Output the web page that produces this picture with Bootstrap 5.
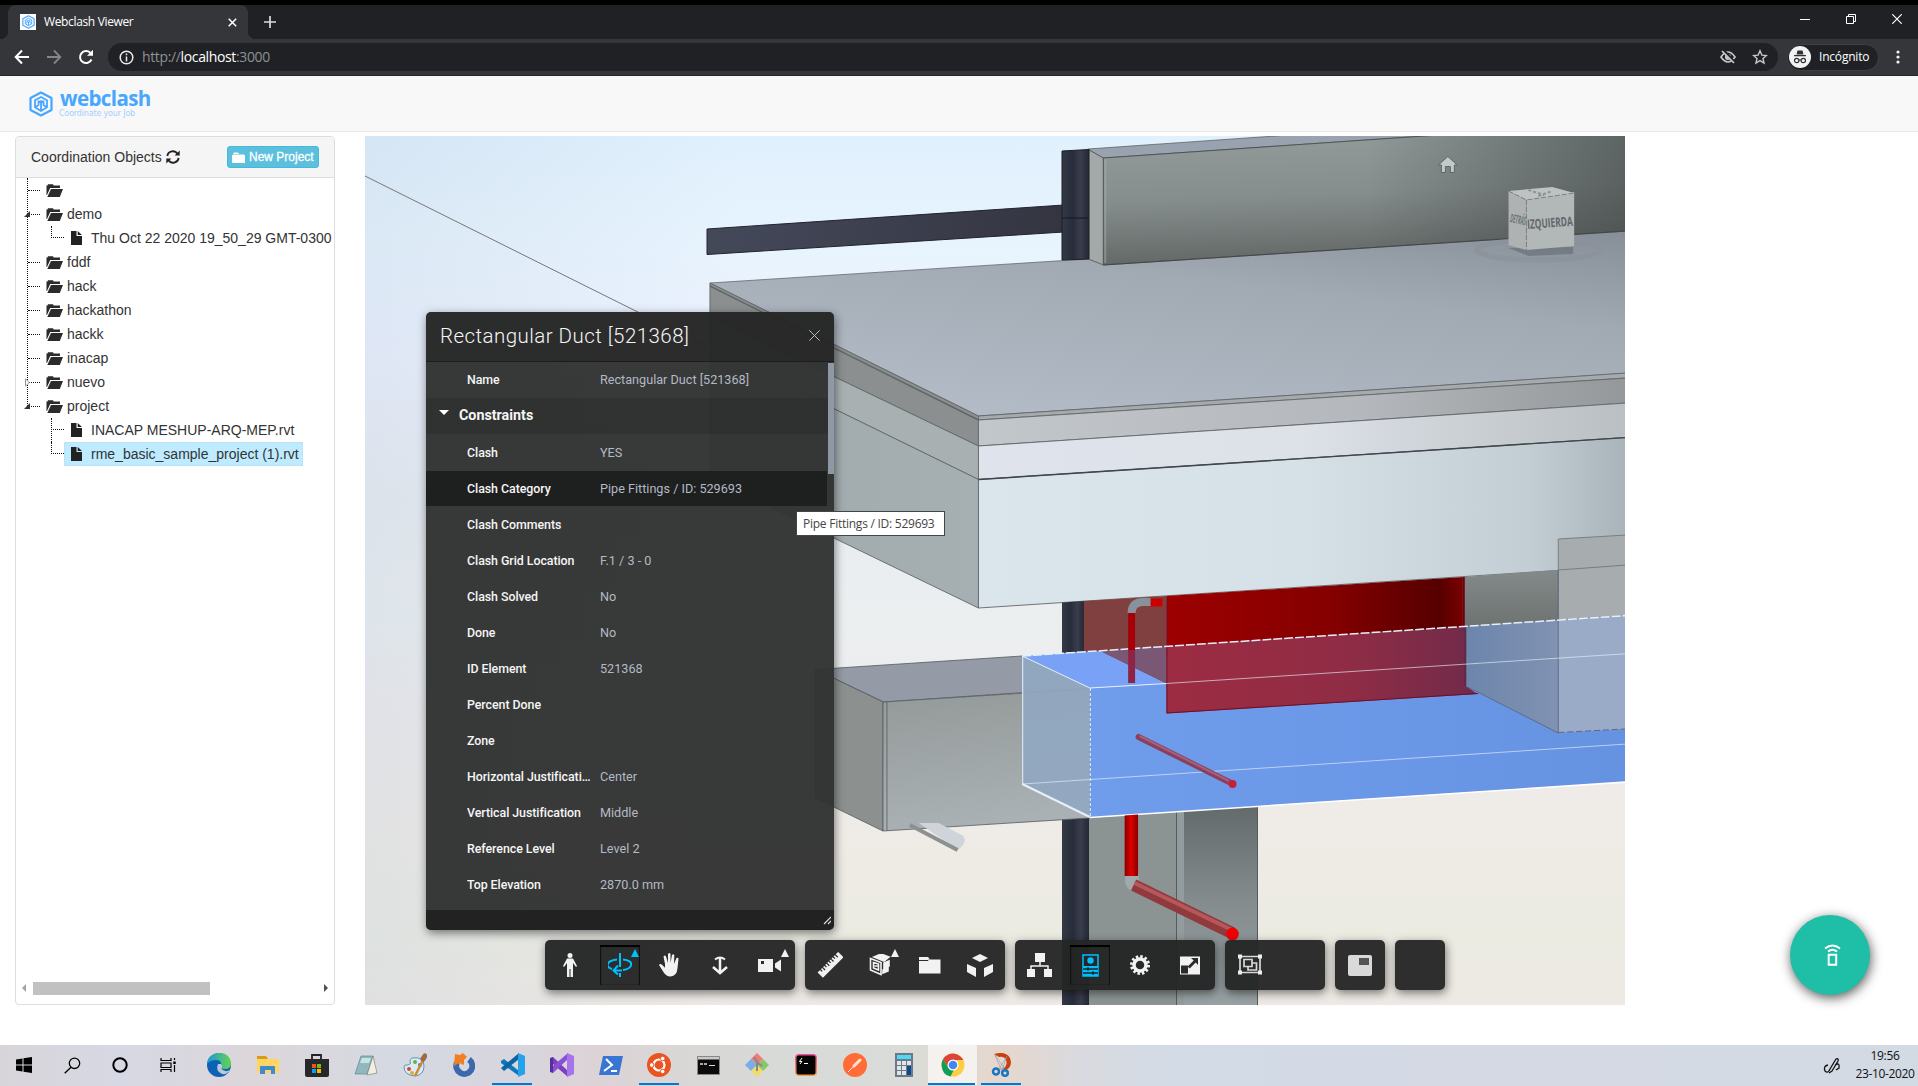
<!DOCTYPE html>
<html lang="es">
<head>
<meta charset="utf-8">
<title>Webclash Viewer</title>
<link href="https://cdn.jsdelivr.net/npm/bootstrap@5.3.0/dist/css/bootstrap.min.css" rel="stylesheet">
<style>
:root{--seg:"Open Sans","Noto Sans",sans-serif;--art:Roboto,"Noto Sans",sans-serif}
body{width:1918px;height:1086px;overflow:hidden;font-family:"Liberation Sans",Arial,sans-serif;font-size:14px;line-height:20px;color:#333;background:#fff}
svg{display:block;flex:none}
.tabstrip{height:39px;background:#202124;border-top:5px solid #000;padding-left:8px}
.wtab{width:240px;height:34px;background:#35363a;border-radius:8px 8px 0 0;padding:0 11px 0 12px;color:#fff;font:12px/34px var(--seg);letter-spacing:-.35px;position:relative}
.wtab::before,.wtab::after{content:"";position:absolute;bottom:0;width:8px;height:8px;background:radial-gradient(circle at 0 0,transparent 8px,#35363a 8.5px)}
.wtab::before{left:-8px}
.wtab::after{right:-8px;transform:scaleX(-1)}
.fav{width:16px;height:16px;background:#fff;margin-right:8px}
.wbtns{gap:36px;padding-right:16px;height:28px}
.omnirow{height:37px;background:#35363a;border-bottom:1px solid #29242a;padding:0 14px 0 14px}
.omnirow>svg+svg{margin-left:16px}
.omni{width:1670px;height:28px;border-radius:14px;background:#202124;margin-left:14px;padding:0 10px 0 11px;font:14px/28px var(--seg);color:#8d9196;letter-spacing:-.36px}
.omni b{font-weight:400;color:#fff}
.incog{width:92px;height:27px;border-radius:14px;background:#202124;border:1px solid #3f4044;margin-left:9px;padding-left:1px;color:#fff;font:12px/24px var(--seg);letter-spacing:-.2px}
.apphead{height:56px;background:#f8f8f8;border-bottom:1px solid #e7e7e7;padding:15px 0 0 29px}
.brandtext{margin-left:7px}
.brandname{font:700 20.5px/19px "Open Sans",sans-serif;color:#47a6ff;letter-spacing:-.6px;margin-top:-2px}
.brandsub{font:8px/10px "DejaVu Sans",sans-serif;color:#a2d0fc;letter-spacing:-.17px;margin:1px 0 0 -1px}
.workarea{height:913px;padding:4px 0 0 15px}
.objects{width:320px;height:869px;border:1px solid #ddd;border-radius:4px;background:#fff}
.objhead{height:41px;background:#f5f5f5;border-bottom:1px solid #ddd;padding:0 15px;border-radius:3px 3px 0 0}
.btn-new{background:#5bc0de;border:1px solid #46b8da;color:#fff;font-size:12px;line-height:18px;width:92px;height:22px;padding:0 4px;border-radius:3px;-webkit-text-stroke:.3px #fff}
.tree{position:relative;height:801px;overflow:hidden;margin:0;padding:0;list-style:none}
.tree::before{content:"";position:absolute;left:11px;top:0;height:228px;border-left:1px dotted #111}
.tree li{height:24px;display:flex;align-items:center;white-space:nowrap}
.tree li>*{flex:none}
.tw{width:12px;height:24px;display:flex;align-items:center;justify-content:flex-end;z-index:1}
.tw svg{margin-right:-2px}
.dots{width:12px;border-top:1px dotted #111;margin-right:6px}
.tree .kid{padding-left:35px}
.kid .elbow{width:13px;height:24px;position:relative;border:0}
.elbow::before{content:"";position:absolute;inset:0 0 12px 0;border-left:1px dotted #111;border-bottom:1px dotted #111}
.elbow.thru::after{content:"";position:absolute;left:0;top:0;bottom:0;border-left:1px dotted #111}
.leaf{height:24px;display:flex;align-items:center;padding:0 4px 0 7px;gap:9px;border-radius:2px;line-height:22px}
.leaf.on{background:#beebff;box-shadow:inset 0 0 1px #999}
.hbar{height:18px;padding:0 4px}
.hthumb{width:177px;height:13px;background:#c1c1c1;margin-left:5px}
.viewer{width:1260px;height:869px;margin-left:30px;position:relative;overflow:hidden}
.props{position:absolute;left:61px;top:176px;width:408px;height:618px;border-radius:5px;background:rgba(38,39,38,.93);box-shadow:1px 3px 10px rgba(0,0,0,.5);color:#f5f5f5;font:13px/36px var(--art)}
.ptitle{height:50px;border-bottom:1px solid #1b1c1c;padding:0 14px 2px;font-size:20.5px;background:rgba(35,36,36,.5);border-radius:5px 5px 0 0;font-weight:300;letter-spacing:.45px}
.prow{height:36px;padding-left:41px;width:401px}
.prow dt{width:133px;font-weight:500;font-size:12.4px;letter-spacing:-.05px;padding-right:8px;overflow:hidden;text-overflow:ellipsis;white-space:nowrap;margin:0}
.prow dd{margin:0;color:#b3bac6;font-size:12.65px}
.plist{height:548px;background:rgba(60,61,61,.5);margin:0;position:relative;overflow:hidden}
.plist::after{content:"";position:absolute;right:0;top:1px;width:6px;height:111px;background:#8f98a5}
.phead{height:36px;padding:0 0 3px 13px;font-weight:700;font-size:14.3px;gap:10px;background:rgba(38,38,38,.35)}
.phead svg{margin-top:-5px}
.prow.first{height:37px;padding-top:1px}
.prow.hov{background:#1e1f1f;height:35px;margin-bottom:1px;line-height:35px}
.pfoot{height:20px;background:#222;border-radius:0 0 5px 5px;padding:6px 3px 0}
.tipbox{position:absolute;left:431px;top:375px;width:149px;height:25px;background:#fff;border:1px solid #444;color:#444;font:12px/23px var(--seg);letter-spacing:-.25px;padding-left:6px;white-space:nowrap}
.tools{position:absolute;left:180px;top:804px;gap:10px}
.tgroup{background:rgba(36,37,37,.96);border-radius:5px;height:50px;box-shadow:1px 3px 10px rgba(0,0,0,.5)}
.tgroup.wide{width:100px}
.tbtn{width:50px;height:50px;display:flex;align-items:center;justify-content:center;position:relative;color:#f2f2f2}
.tbtn.act{color:#00bfff}
.tbtn.act::before{content:"";position:absolute;left:5px;top:5px;width:40px;height:40px;box-shadow:inset 0 2px 1px #000,inset 1px 0 1px #111,inset -1px 0 1px #111}
.tbtn.more::after{content:"";position:absolute;right:6px;top:9px;border:4px solid transparent;border-top:0;border-bottom:8px solid currentColor}
.fab{position:absolute;left:1790px;top:915px;width:80px;height:80px;border-radius:50%;background:#1fbea6;box-shadow:1px 3px 12px rgba(0,0,0,.65)}
.taskbar{height:41px;background:linear-gradient(90deg,#d8d5da 0,#d6d8e3 120px,#dcd6da 250px,#d5d9e2 400px,#d8d5dd 520px,#dcd3d6 600px,#d8d9d6 720px,#d9dcd9 900px,#e6d7cd 1000px,#d9dadf 1080px,#d2dbe6 1180px,#d5d9e4 1500px,#d2dae4 1918px)}
.tk{width:48.9px;height:40px;display:flex;align-items:center;justify-content:center;position:relative}
.tk.sys{width:48px}
.tk.sys+.tk:not(.sys){margin-left:3px}
.tk.run::after{content:"";position:absolute;left:4px;right:5px;bottom:0;height:2px;background:#0078d7}
.tk.cur{background:#f5f1ef}.tk.cur::after{left:0;right:2px}
.taskbar .pen{margin-right:13px}
.clock{font:12px/18px var(--seg);letter-spacing:-.35px;color:#111;text-align:center;width:62px;margin-right:2px;padding-bottom:2px}
</style>
<script src="https://cdn.jsdelivr.net/npm/bootstrap@5.3.0/dist/js/bootstrap.bundle.min.js"></script>
</head>
<body class="d-flex flex-column">
<svg width="0" height="0" class="position-absolute">
<defs>
<symbol id="logo" viewBox="0 0 24 26"><g fill="none" stroke="#47a6ff" stroke-width="2.2" stroke-linejoin="round"><path d="M12 1.5 22.500 7v12L12 24.500 1.500 19V7z"/><path stroke-width="1.800" d="M12 6l6 3.200v7L12 20l-6-3.800v-7zM6.500 16l3-2V9.500M17.500 16l-3-2V9.500M9.500 11.500 12 10l2.500 1.500M12 12v8"/></g></symbol>
<symbol id="fopen" viewBox="0 0 17 13"><path fill="#2b2b2b" d="M.5 11V1.500h1L2 .300h5l.6 1.200H14V4H4.200L1 11zM5 5h12l-3.200 8H1.300z"/></symbol>
<symbol id="file" viewBox="0 0 11 14"><path fill="#222" d="M0 0h5.500v5H11v9H0zM6.700 0 11 4H6.700z"/></symbol>
</defs></svg>

<header class="tabstrip d-flex flex-shrink-0">
 <div class="wtab d-flex align-items-center"><span class="fav d-flex align-items-center justify-content-center"><svg width="13" height="14"><use href="#logo"/></svg></span>Webclash Viewer
  <svg class="ms-auto" width="9" height="9" stroke="#fff" stroke-width="1.500"><path d="M.7.7l7.500 7.500M8.200.7.700 8.200"/></svg></div>
 <svg width="12" height="12" class="align-self-center ms-3" stroke="#dadce0" stroke-width="1.700"><path d="M6 0v12M0 6h12"/></svg>
 <div class="wbtns d-flex ms-auto align-items-center"><svg width="10" height="10" stroke="#fff"><path d="M0 5.500h10"/></svg><svg width="10" height="10" stroke="#fff" fill="none"><path d="M.5 2.500h7v7h-7zM2.500 2.500v-2h7v7h-2"/></svg><svg width="10" height="10" stroke="#fff" stroke-width="1.200"><path d="M.3.3l9.400 9.400M9.700.3.300 9.700"/></svg></div>
</header>
<div class="omnirow d-flex align-items-center flex-shrink-0">
 <svg width="16" height="16" fill="none" stroke="#fff" stroke-width="2"><path d="M15 8H2M8 1.500 1.700 8 8 14.500"/></svg>
 <svg width="16" height="16" fill="none" stroke="#85868a" stroke-width="1.800"><path d="M1 8h13M8 1.500 14.300 8 8 14.500"/></svg>
 <svg width="16" height="16" fill="none" stroke="#fff" stroke-width="2"><path d="M13.500 10.500A6 6 0 1 1 12.300 3.800L14 5.500"/><path d="M15 .8v6H9z" fill="#fff" stroke="none"/></svg>
 <div class="omni d-flex align-items-center"><svg width="15" height="15" class="me-2" fill="none" stroke="#e8eaed" stroke-width="1.500"><circle cx="7.500" cy="7.500" r="6.300"/><path d="M7.500 6.500v5M7.500 3.500v1.700"/></svg><span>http://<b>localhost</b>:3000</span>
  <svg class="ms-auto me-3" width="16" height="14" fill="none" stroke="#c6c8cb" stroke-width="1.700"><path d="M1 7q7-10 14 0-7 10-14 0z"/><circle cx="8" cy="7" r="2.200" fill="#c6c8cb"/><path stroke="#202124" stroke-width="3" d="M3 0l12 13"/><path d="M2 1l12 12"/></svg>
  <svg width="16" height="16" fill="none" stroke="#c6c8cb" stroke-width="1.400"><path d="M8 1.800l1.900 4.300 4.500.4-3.400 3 1 4.500L8 11.600 4 14l1-4.500-3.400-3 4.500-.4z"/></svg></div>
 <div class="incog d-flex align-items-center"><svg width="22" height="22" viewBox="0 0 22 22"><circle cx="11" cy="11" r="11" fill="#f1f3f4"/><path fill="#303134" d="M7.500 8.500 8.500 4.500h5l1 4zM5 9h12v1.300H5z"/><g fill="none" stroke="#303134" stroke-width="1.200"><circle cx="7.700" cy="14.500" r="2.200"/><circle cx="14.300" cy="14.500" r="2.200"/><path d="M10 14h2"/></g></svg><span class="ms-2">Incógnito</span></div>
 <svg class="ms-auto" width="12" height="16" fill="#f1f3f4"><circle cx="6" cy="3" r="1.600"/><circle cx="6" cy="8" r="1.600"/><circle cx="6" cy="13" r="1.600"/></svg>
</div>

<nav class="apphead d-flex flex-shrink-0"><svg width="24" height="26"><use href="#logo"/></svg><div class="brandtext"><div class="brandname">webclash</div><div class="brandsub">Coordinate your Job</div></div></nav>

<main class="workarea d-flex flex-shrink-0">
 <section class="objects d-flex flex-column">
  <div class="objhead d-flex align-items-center flex-shrink-0">Coordination Objects
   <svg width="14" height="14" class="ms-1" fill="none" stroke="#222" stroke-width="1.800"><path d="M1.300 6A5.700 5.700 0 0 1 11.500 3.600M12.700 8A5.700 5.700 0 0 1 2.500 10.400"/><path fill="#222" stroke="none" d="M13.700.5v5H8.600zM.3 13.500v-5h5.100z"/></svg>
   <button class="btn btn-new ms-auto d-flex align-items-center"><svg width="13" height="11" class="me-1" fill="#fff"><path d="M0 3h13v8H0zM1 2l1-1.500h4L7 2h5v.6H1z"/></svg>New Project</button></div>
  <ul class="tree">
   <li><span class="tw"></span><span class="dots"></span><svg width="17" height="13"><use href="#fopen"/></svg></li>
   <li><span class="tw"><svg width="6" height="6"><path fill="#333" d="M6 0v6H0z"/></svg></span><span class="dots"></span><svg width="17" height="13" class="me-1"><use href="#fopen"/></svg>demo</li>
   <li class="kid"><span class="elbow"></span><span class="leaf"><svg width="11" height="14"><use href="#file"/></svg>Thu Oct 22 2020 19_50_29 GMT-0300</span></li>
   <li><span class="tw"></span><span class="dots"></span><svg width="17" height="13" class="me-1"><use href="#fopen"/></svg>fddf</li>
   <li><span class="tw"></span><span class="dots"></span><svg width="17" height="13" class="me-1"><use href="#fopen"/></svg>hack</li>
   <li><span class="tw"></span><span class="dots"></span><svg width="17" height="13" class="me-1"><use href="#fopen"/></svg>hackathon</li>
   <li><span class="tw"></span><span class="dots"></span><svg width="17" height="13" class="me-1"><use href="#fopen"/></svg>hackk</li>
   <li><span class="tw"></span><span class="dots"></span><svg width="17" height="13" class="me-1"><use href="#fopen"/></svg>inacap</li>
   <li><span class="tw"><svg width="5" height="9"><path fill="#fff" stroke="#999" d="M.5.8v7.400l3.700-3.700z"/></svg></span><span class="dots"></span><svg width="17" height="13" class="me-1"><use href="#fopen"/></svg>nuevo</li>
   <li><span class="tw"><svg width="6" height="6"><path fill="#333" d="M6 0v6H0z"/></svg></span><span class="dots"></span><svg width="17" height="13" class="me-1"><use href="#fopen"/></svg>project</li>
   <li class="kid"><span class="elbow thru"></span><span class="leaf"><svg width="11" height="14"><use href="#file"/></svg>INACAP MESHUP-ARQ-MEP.rvt</span></li>
   <li class="kid"><span class="elbow"></span><span class="leaf on"><svg width="11" height="14"><use href="#file"/></svg>rme_basic_sample_project (1).rvt</span></li>
  </ul>
  <div class="hbar d-flex align-items-center"><svg width="8" height="8"><path fill="#a3a3a3" d="M6 0v8L2 4z"/></svg><div class="hthumb"></div><svg class="ms-auto" width="8" height="8"><path fill="#505050" d="M2 0v8l4-4z"/></svg></div>
 </section>

 <section class="viewer">
  <svg width="1260" height="869" viewBox="365 136 1260 869">
   <defs>
    <linearGradient id="bg" x1="0" y1="0" x2="0" y2="1"><stop offset="0" stop-color="#e0f0fd"/><stop offset=".12" stop-color="#e7f4fe"/><stop offset=".25" stop-color="#ecf1fe"/><stop offset=".42" stop-color="#e9ecf0"/><stop offset=".56" stop-color="#ebeff0"/><stop offset=".66" stop-color="#eeebec"/><stop offset=".8" stop-color="#efebe6"/><stop offset=".92" stop-color="#ebebe2"/><stop offset="1" stop-color="#eee9e4"/></linearGradient>
    <linearGradient id="bgl"><stop offset="0" stop-color="#b4c4d8" stop-opacity=".24"/><stop offset=".3" stop-color="#b4c4d8" stop-opacity="0"/></linearGradient>
    <linearGradient id="wall" x1="0" y1="0" x2=".15" y2="1"><stop offset="0" stop-color="#939b9b"/><stop offset=".5" stop-color="#868e8d"/><stop offset="1" stop-color="#626866"/></linearGradient>
    <linearGradient id="wallr"><stop offset=".5" stop-color="#3e4544" stop-opacity="0"/><stop offset="1" stop-color="#3e4544" stop-opacity=".62"/></linearGradient>
    <linearGradient id="slab" x1="1" y1="0" x2=".4" y2="1"><stop offset="0" stop-color="#868e98"/><stop offset=".4" stop-color="#a1a9b3"/><stop offset="1" stop-color="#b2bac5"/></linearGradient>
    <linearGradient id="fr"><stop offset="0" stop-color="#dae6ec"/><stop offset=".5" stop-color="#d6e1e7"/><stop offset=".85" stop-color="#c2ced3"/><stop offset="1" stop-color="#a8b4b9"/></linearGradient>
    <linearGradient id="wh"><stop offset="0" stop-color="#dfe4ec"/><stop offset=".5" stop-color="#dde1e8"/><stop offset="1" stop-color="#b9bfc2"/></linearGradient>
    <linearGradient id="gy"><stop offset="0" stop-color="#c2c7cb"/><stop offset=".6" stop-color="#b4b7bb"/><stop offset="1" stop-color="#94989a"/></linearGradient>
    <linearGradient id="sd"><stop offset="0" stop-color="#9fa9ac"/><stop offset="1" stop-color="#a6b0b3"/></linearGradient>
    <linearGradient id="bm"><stop offset="0" stop-color="#44495a"/><stop offset="1" stop-color="#343541"/></linearGradient>
    <linearGradient id="rd"><stop offset="0" stop-color="#9d0000"/><stop offset=".55" stop-color="#850000"/><stop offset=".92" stop-color="#560000"/><stop offset="1" stop-color="#7c0000"/></linearGradient>
    <linearGradient id="rs"><stop offset="0" stop-color="#9c2c42"/><stop offset=".6" stop-color="#8f2c45"/><stop offset="1" stop-color="#6f2b4a"/></linearGradient>
    <linearGradient id="dk"><stop offset="0" stop-color="#343945"/><stop offset=".4" stop-color="#282d3c"/><stop offset=".7" stop-color="#3a3d4c"/><stop offset="1" stop-color="#242834"/></linearGradient>
    <linearGradient id="bl" x1="0" y1="0" x2="1" y2="0"><stop offset="0" stop-color="#6f9dec"/><stop offset="1" stop-color="#6692e2"/></linearGradient>
    <linearGradient id="du" x1="0" y1="0" x2=".2" y2="1"><stop offset="0" stop-color="#939998"/><stop offset="1" stop-color="#aab1b4"/></linearGradient>
    <linearGradient id="co" x1="0" y1="0" x2="0" y2="1"><stop offset="0" stop-color="#606868"/><stop offset=".5" stop-color="#848c8e"/><stop offset="1" stop-color="#98a1a4"/></linearGradient>
    <linearGradient id="pp"><stop offset="0" stop-color="#8a0000"/><stop offset=".45" stop-color="#dd0000"/><stop offset="1" stop-color="#8a0000"/></linearGradient>
    <linearGradient id="bx"><stop offset="0" stop-color="#6c85ac"/><stop offset="1" stop-color="#8192b2"/></linearGradient>
    <linearGradient id="gf" x1="0" y1="0" x2="0" y2="1"><stop offset="0" stop-color="#848989"/><stop offset="1" stop-color="#6d7371"/></linearGradient>
   </defs>
   <path fill="url(#bg)" d="M365 136h1260v869H365z"/><path fill="url(#bgl)" d="M365 136h1260v869H365z"/>
   <path stroke="#777" d="M365 176 710 348"/>
   <path fill="url(#bm)" stroke="#22242c" d="M707 229 1064 205v27L707 254.500z"/>
   <g transform="translate(700 0) scale(.9945 1) translate(-700 0)">
   <path fill="#99a3b0" stroke="#555" stroke-width=".7" d="M1090 149 1293 135h150L1105 158z"/>
   <path fill="url(#wall)" stroke="#444" stroke-width=".8" d="M1105.500 158 1443 135h190v96L1105.500 265z"/><path fill="url(#wallr)" d="M1105.500 158 1443 135h190v96L1105.500 265z"/>
   <path fill="#a3a9a8" stroke="#4a4e4e" stroke-width=".8" d="M1090.500 149.500l15 8.500v107l-15-6z"/><path stroke="#a7afae" stroke-width="2" opacity=".5" d="M1107.500 159v104"/>
   <path fill="url(#slab)" stroke="#666a6e" stroke-width=".8" d="M710 283 1090 259l15.500 6L1635 231v142L980 416z"/>
   <path stroke="#444" d="M1105.500 265 1632 231"/>
   <g stroke="#62666a" stroke-width=".9">
   <path fill="#8b8f8f" d="M710 283 980 416v30L710 317z"/><path stroke-width="1.500" d="M710 286 980 420"/>
   <path fill="#a9b0b2" d="M710 317 980 446v33.500L710 348z"/>
   <path fill="url(#sd)" d="M710 348 980 479.500V608L710 478z"/>
   <path fill="#a5aaad" d="M980 416 1632 373v5L980 420z"/>
   <path fill="url(#gy)" d="M980 420 1632 378v25L980 446z"/>
   <path fill="url(#wh)" d="M980 446 1632 403v34.500L980 479.500z"/>
   <path fill="url(#fr)" d="M980 479.500 1632 437.500V566L980 608z"/></g>
   <path stroke="#40464a" stroke-width="1.400" d="M980 479.500 1632 437.500"/>
   </g>
   <path fill="url(#dk)" stroke="#1c1e25" d="M1062 151l27-1.500V259l-27 1z"/><path stroke="#15161c" d="M1062 218h27"/>
   <!-- lower column -->
   <path fill="url(#dk)" d="M1062 602.500l22-1.500V652l-22 1z"/>
   <path fill="url(#dk)" d="M1062 800h27v205h-27z"/><path fill="#8b9393" d="M1089 800h88v205h-88z"/><path fill="#929b9d" d="M1176 800h9v205h-9z"/><path fill="url(#co)" d="M1184 800h74v205h-74z"/><path stroke="#555c5c" d="M1176.500 800v205M1257.500 800v205"/>
   <g transform="translate(700 0) scale(.9945 1) translate(-700 0)">
   <!-- neighbouring duct -->
   <g stroke="#555a60" stroke-width=".8"><path fill="#949ba6" d="M816 669.500 1024 656l68 32L885 702z"/><path fill="#8c9190" d="M816 669.500 884 702v129l-68-33z"/><path fill="url(#du)" d="M884 702 1092 689v129L884 831z"/><path fill="none" d="M888 702v129"/></g>
   <path fill="#cfd3da" d="M920 823h20l25 13q4 7-6 14z"/><path stroke="#8b9090" stroke-width="4" d="M911 825 959 850"/>
   <!-- crossing duct -->
   <path fill="#80403f" d="M1086 601 1169 596v88l-66-32-17 1z"/>
   <path fill="url(#rd)" d="M1169 596 1468 577v60L1169 656z"/>
   <path fill="url(#bl)" d="M1092 688 1632 654v128L1092 817z"/>
   <path fill="#79a2f6" d="M1024 656 1102.500 651 1169 683.500 1092 688z"/>
   <path fill="#7a5775" d="M1102.500 651 1169 646.500V683.500z"/>
   <path fill="url(#gf)" d="M1467 577 1563 570v51l-96 7z"/>
   <path fill="url(#bx)" d="M1467 626.500 1563 620v112.500L1467 684z"/>
   <path fill="url(#rs)" d="M1169 646 1469 626.500 1470 686 1482 694 1169 713.500z"/>
   <path fill="#a7acaf" stroke="#6c7174" stroke-width=".8" d="M1563 539 1632 535v80.500L1563 620z"/><path stroke="#777c80" d="M1563 570 1632 565"/>
   <path fill="#9aabc8" d="M1563 620 1632 615.500V729L1563 732.500z"/>
   <g fill="none" stroke="#61697e"><path d="M1563 570v163l-91-46"/><path stroke-dasharray="6 3" d="M1563 732.500 1630 729"/></g>
   <path fill="none" stroke="#6b1028" d="M1169.500 597v116l313-19.500"/><path stroke="#6d0010" stroke-width="2" d="M1468 577v50"/><path stroke="#612a48" stroke-width="2" d="M1469.500 627v59"/>
   <path fill="#91a8c1" fill-opacity=".93" d="M1024 656l68 32v129l-68-33z"/>
   <g fill="none" stroke="#e7effb"><path stroke-width="1.500" stroke-dasharray="9 2" d="M1024 656 1632 615.500"/><path d="M1024 656l68 32 77-4.500"/><path opacity=".65" d="M1169 683.500 1632 653.700M1024 784 1632 744"/><path stroke-dasharray="3 2" d="M1092.500 688v129"/><path d="M1024.500 656v128"/><path stroke-width="2" d="M1024 784l68 33"/><path stroke="#fff" stroke-width="1.500" d="M1092 817.500 1632 782"/></g>
   <!-- sprinkler pipes -->
   <path stroke="#a80009" stroke-width="7" d="M1134 612v38"/><path stroke="#8e2445" stroke-width="7" d="M1134 650v33"/><path stroke="#c00" stroke-width="8" d="M1153 602.500h12"/><path fill="none" stroke="#89929a" stroke-width="8" d="M1134 613q0-10 10-11h9"/>
   <path stroke="#8c3f5c" stroke-width="6" stroke-linecap="round" d="M1141 737 1234 783"/><path stroke="#a2627e" stroke-width="2" d="M1142 736 1232 781"/><circle cx="1235.500" cy="784" r="4" fill="#c8203a"/>
   <path fill="#a1a9ad" d="M1127.500 874h13.500v8l-3 10q-9-1-10.500-10z"/><path fill="url(#pp)" d="M1127 815.500l13.500-1V876H1127z"/><path stroke="#913a3e" stroke-width="12" d="M1136 885 1235 933"/><path stroke="#b6575b" stroke-width="4" d="M1137 883 1235 930"/><ellipse cx="1235.500" cy="934" rx="6.300" ry="6.500" fill="#f00000"/>
   <!-- view cube -->
   <ellipse cx="1543" cy="250" rx="62" ry="10" fill="none" stroke="#8a9098" stroke-width="5" opacity=".55"/><path fill="#6b7177" opacity=".7" d="M1513 248l20 8 45-2v-7z"/>
   <path fill="#aeb2b3" d="M1513 191l18 9v50l-18-5z"/><path fill="#b2b7b8" d="M1531 200l48-8v54l-48 4z"/><path fill="#bec2c2" d="M1513 191l44-4 22 6-48 7z"/>
   <path fill="none" stroke="#7a8082" stroke-dasharray="5 2" d="M1513 191l18 9 48-7M1531 200v50"/><path stroke="#8b9092" stroke-width="2" stroke-dasharray="3 2" d="M1533 190l16 5M1543 196l14-5"/>
   <text x="1532" y="229" font-family="Open Sans, sans-serif" font-weight="700" font-size="13" fill="#61676a" textLength="46" lengthAdjust="spacingAndGlyphs" transform="rotate(-4 1532 229)">IZQUIERDA</text><text x="1514" y="222" font-family="Open Sans, sans-serif" font-weight="700" font-size="12" fill="#6c7275" textLength="16" lengthAdjust="spacingAndGlyphs" transform="rotate(12 1514 222)">DETRÁS</text>
   <path fill="#c3c8c8" stroke="#5f6666" d="M1442.500 165l9.500-8.500 9.500 8.500h-3v7.500h-4v-6h-5v6h-4V165z"/>
   </g>
  </svg>

  <div class="props">
   <div class="ptitle d-flex align-items-center justify-content-between"><span>Rectangular Duct [521368]</span><svg width="11" height="11" stroke="#bbb"><path d="M.3.3l10.400 10.400M10.700.3.300 10.700"/></svg></div>
   <dl class="plist">
    <div class="prow d-flex"><dt>Name</dt><dd>Rectangular Duct [521368]</dd></div>
    <div class="phead d-flex align-items-center"><svg width="10" height="5" fill="#fff"><path d="M0 0h10L5 5z"/></svg><span>Constraints</span></div>
    <div class="prow first d-flex"><dt>Clash</dt><dd>YES</dd></div>
    <div class="prow hov d-flex"><dt>Clash Category</dt><dd>Pipe Fittings / ID: 529693</dd></div>
    <div class="prow d-flex"><dt>Clash Comments</dt><dd></dd></div>
    <div class="prow d-flex"><dt>Clash Grid Location</dt><dd>F.1 / 3 - 0</dd></div>
    <div class="prow d-flex"><dt>Clash Solved</dt><dd>No</dd></div>
    <div class="prow d-flex"><dt>Done</dt><dd>No</dd></div>
    <div class="prow d-flex"><dt>ID Element</dt><dd>521368</dd></div>
    <div class="prow d-flex"><dt>Percent Done</dt><dd></dd></div>
    <div class="prow d-flex"><dt>Zone</dt><dd></dd></div>
    <div class="prow d-flex"><dt>Horizontal Justification</dt><dd>Center</dd></div>
    <div class="prow d-flex"><dt>Vertical Justification</dt><dd>Middle</dd></div>
    <div class="prow d-flex"><dt>Reference Level</dt><dd>Level 2</dd></div>
    <div class="prow d-flex"><dt>Top Elevation</dt><dd>2870.0 mm</dd></div>
   </dl>
   <div class="pfoot d-flex justify-content-end"><svg width="8" height="9" stroke="#ddd" stroke-width="1.200"><path d="M1 8 8 1M5 8l3-3"/></svg></div>
  </div>
  <div class="tipbox">Pipe Fittings / ID: 529693</div>

  <div class="tools d-flex">
   <div class="tgroup d-flex">
    <span class="tbtn"><svg width="14" height="24" fill="currentColor"><circle cx="7" cy="2.500" r="2.500"/><path d="M4 5.500h6l4 7.500-1 1-3-4v14H7.500v-8h-1v8H4V10l-3 4-1-1z"/></svg></span>
    <span class="tbtn act more"><svg width="24" height="25" fill="none" stroke="currentColor" stroke-width="2"><path d="M12 0v14M12 20v4"/><path d="M15 6.500c12 1 10 9 0 10.500M9 6.500C-3 8-2 14 4 16"/><path d="M14 17.500H6M10 12.500 5.500 17.500 10 21.500"/></svg></span>
    <span class="tbtn"><svg width="22" height="24" fill="currentColor"><path d="M6 11 4.500 3.500q1.500-2 2.500 0L9 10V1q1.500-2 2.500 0v9l1.500-8q2-1.500 2.300.3L15 11l2.500-6q2-1 2 .8L18.500 15q-.5 8-7 8.500-5 0-8-6L0 12q1-2 3-.3l3 3z"/></svg></span>
    <span class="tbtn"><svg width="18" height="20" fill="none" stroke="currentColor" stroke-width="2.500"><path d="M9 2v15M2 12l7 6 7-6"/><path stroke-width="2" d="M4 4.500q5-4 10 0"/></svg></span>
    <span class="tbtn more"><svg width="24" height="16" fill="currentColor"><path fill-rule="evenodd" d="M0 2h15v13H0zM3 4v3h3V4zM17 6.500l6-4v12l-6-4z"/></svg></span>
   </div>
   <div class="tgroup d-flex">
    <span class="tbtn"><svg width="26" height="26"><g transform="rotate(-45 13 13)"><path fill="currentColor" d="M-1 9.500h29v7.500H-1z"/><path stroke="#2c2c2c" stroke-width="1.300" d="M3 9v3M6 9v4M9 9v3M12 9v4M15 9v3M18 9v4M21 9v3M24 9v4"/></g></svg></span>
    <span class="tbtn more"><svg width="22" height="22" fill="none" stroke="currentColor" stroke-width="1.600"><path fill="currentColor" d="M5 3l7-3 8 3-5 4z"/><path fill="currentColor" d="M15 9l5-2v5l-5 2zM14 16l5-2v3l-5 2z"/><path d="M1.500 4.500 12 8.500v12L1.500 16z"/><path d="M4.500 8.500 9.500 10v6l-5-2zM9.500 12h-4"/></svg></span>
    <span class="tbtn"><svg width="22" height="18" fill="currentColor"><path d="M0 1h9l2 2.500h10.500V17.500H0zM0 4.500h9"/><path stroke="#2c2c2c" d="M0 4.500h9l1-1"/></svg></span>
    <span class="tbtn"><svg width="26" height="23" fill="currentColor"><path d="M13 0l8 4-8 4-8-4zM0 10l9 4v9l-9-5zM26 10l-9 4v9l9-5z"/></svg></span>
   </div>
   <div class="tgroup d-flex">
    <span class="tbtn"><svg width="26" height="24" fill="currentColor"><path d="M8 0h10v9H8zM0 16h8v8H0zM17 16h8v8h-8z"/><path fill="none" stroke="currentColor" stroke-width="1.500" d="M13 9v4M4 17v-4h17v4"/></svg></span>
    <span class="tbtn act"><svg width="17" height="23"><path fill="none" stroke="currentColor" stroke-width="1.500" d="M1 1h15v21H1z"/><circle cx="8.500" cy="6.500" r="3.200" fill="currentColor"/><path fill="currentColor" d="M1 12h15v10H1z"/><path stroke="#222" stroke-width="1.300" d="M1 15h15M1 19h15"/><path stroke="#222" stroke-width="3" d="M5 15h2M10 19h2"/></svg></span>
    <span class="tbtn"><svg width="20" height="20" viewBox="-10 -10 20 20"><circle r="6" fill="none" stroke="currentColor" stroke-width="3.500"/><circle r="8.500" fill="none" stroke="currentColor" stroke-width="3" stroke-dasharray="2.450 2"/></svg></span>
    <span class="tbtn"><svg width="20" height="19"><path fill="currentColor" d="M0 .5h20v18H0z"/><path fill="#292a2a" d="M1 9.500h7v8H1zM11 2h7v7l-2.300-2.400-6 6-2-2 6-6z"/></svg></span>
   </div>
   <div class="tgroup wide d-flex">
    <span class="tbtn"><svg width="24" height="22" fill="none" stroke="#d8d8d8" stroke-width="1.700"><path d="M2 2.500h20v16H2z"/><path d="M6 5.500h8v7H6zM14 9h4.500v7H10v-3.500"/><g fill="#eee" stroke="none"><path d="M0 .5h4v4H0zM20 .5h4v4h-4zM0 16.500h4v4H0zM20 16.500h4v4h-4z"/></g></svg></span>
   </div>
   <div class="tgroup d-flex"><span class="tbtn"><svg width="24" height="21"><rect width="24" height="21" rx="2" fill="#d9d9d9"/><path fill="#555" d="M11 3h10v7H11z"/></svg></span></div>
   <div class="tgroup d-flex"><span class="tbtn"></span></div>
  </div>
 </section>
</main>

<div class="fab d-flex align-items-center justify-content-center"><svg width="17" height="22" fill="none" stroke="#fff" stroke-width="2" class="ms-1"><path d="M1 4.500q7.500-6 15 0M4 7.500q4.500-3.500 9 0"/><path d="M4.700 10.700h7.500v10H4.700z"/></svg></div>

<footer class="taskbar d-flex flex-shrink-0">
 <span class="tk sys"><svg width="16" height="16"><path d="M0 2.500 6.500 1.500v6H0zM7.500 1.300 16 0v7.500H7.500zM0 8.500h6.500v6L0 13.500zM7.500 8.500H16V16l-8.500-1.300z"/></svg></span>
 <span class="tk sys"><svg width="17" height="17" fill="none" stroke="#000" stroke-width="1.300"><circle cx="10.500" cy="6.300" r="5.200"/><path d="M7 10.300.700 16.300"/></svg></span>
 <span class="tk sys"><svg width="16" height="16" fill="none" stroke="#000" stroke-width="2"><circle cx="8" cy="8" r="6.700"/></svg></span>
 <span class="tk sys"><svg width="17" height="16" fill="none" stroke="#000" stroke-width="1.200"><path d="M1 1v2.500h10V1M1 15v-2.500h10V15M1 6h10v4.500H1zM14.500 1v2M14.500 8v7"/><path stroke-width="2.500" d="M14.500 4.500v2.500"/></svg></span>
 <span class="tk"><svg width="24" height="24"><defs><linearGradient id="eg"><stop stop-color="#2196d8"/><stop offset="1" stop-color="#62d64f"/></linearGradient></defs><circle cx="12" cy="12" r="12" fill="#0d62b3"/><path fill="url(#eg)" d="M0 11C1-3 23-4 24 10q0 6-6 6-5 0-4-3 1-6-5-6-6 0-9 4z"/><path fill="#d8dbe4" d="M14 11q2 3 0 4 3 5 9 2-3 5-8 4-7-3-4-10z" opacity=".85"/></svg></span>
 <span class="tk"><svg width="22" height="18"><path fill="#d99a17" d="M0 0h9l2 3v4H0z"/><path fill="#ffd563" d="M0 3h22v14H0z"/><path fill="#3e8bd0" d="M3 18v-7q0-1 1-1h13q1 0 1 1v7h-4v-4H8v4z"/></svg></span>
 <span class="tk"><svg width="24" height="25"><path fill="none" stroke="#222" stroke-width="1.800" d="M7 7V2h9v5"/><path fill="#26282b" d="M0 6h24v16q0 2-2 2H2q-2 0-2-2z"/><path fill="#f25022" d="M7 11h4v4H7z"/><path fill="#7fba00" d="M12 11h4v4h-4z"/><path fill="#00a4ef" d="M7 16h4v4H7z"/><path fill="#ffb900" d="M12 16h4v4h-4z"/></svg></span>
 <span class="tk"><svg width="24" height="22"><path fill="#92b8be" stroke="#4f8088" stroke-width=".6" d="M7 2h12l-6 18H1z"/><path fill="#c6e3e6" d="M8 4h9l-2 5H6z"/><path fill="#f1eee4" stroke="#79736a" stroke-width=".6" d="M19 2l4 17-10 2z"/></svg></span>
 <span class="tk"><svg width="24" height="24"><path fill="#dceaf4" stroke="#5a98bd" d="M9 5q12-2 12 8 0 9-9 10Q1 22 1 14q0-3 4-2 4-1 2-4 0-2 2-3z"/><circle cx="12" cy="9" r="2" fill="#62b447"/><circle cx="6" cy="16" r="2" fill="#dd4131"/><circle cx="9" cy="20" r="2" fill="#d7b22c"/><circle cx="17" cy="12" r="2" fill="#3b7cc6"/><path stroke="#d38932" stroke-width="2.500" d="M12 23 20 7"/><path stroke="#9b6a47" stroke-width="5" stroke-linecap="round" d="M20 6l2-3"/></svg></span>
 <span class="tk"><svg width="22" height="24"><path fill="none" stroke="#3c68ad" stroke-width="6" d="M16 6.500a8 8 0 1 1-12 3"/><path fill="#f08022" d="M2 1l5 1 3-2 4 4-3 3v5l-5-2-5 3z"/></svg></span>
 <span class="tk run"><svg width="24" height="24"><path fill="#0c79bd" d="M0 8l3-2 15 12v5L0 10z"/><path fill="#0b65a4" d="M0 15l3 3L18 6V0z"/><path fill="#26a1ec" d="M17 0l7 3v18l-7 3z"/></svg></span>
 <span class="tk"><svg width="24" height="24"><path fill="#53309c" d="M0 5l3-1v16l-3-1z"/><path fill="#7c3fc0" d="M3 4l15 14v6L3 11z"/><path fill="#8950d1" d="M3 20 18 6V0L3 13z"/><path fill="#a874ee" d="M17 0l7 3v18l-7 3z"/></svg></span>
 <span class="tk"><svg width="24" height="19"><path fill="#3975d3" d="M4 0h20l-4 19H0z"/><path fill="none" stroke="#fff" stroke-width="2" d="M7 3l6 6-8 6M12 15h6"/></svg></span>
 <span class="tk run"><svg width="24" height="24"><circle cx="12" cy="12" r="12" fill="#e95420"/><circle cx="12" cy="12" r="5.500" fill="none" stroke="#fff" stroke-width="2.200"/><g fill="#fff" stroke="#e95420"><circle cx="4.700" cy="12" r="2.300"/><circle cx="15.700" cy="5.500" r="2.300"/><circle cx="15.700" cy="18.500" r="2.300"/></g></svg></span>
 <span class="tk"><svg width="23" height="19"><path fill="#0b0b0b" stroke="#888" d="M.5.5h22v18H.5z"/><path fill="#c9c9c9" d="M1 1h21v2.500H1z"/><path stroke="#ddd" stroke-width="1.500" stroke-dasharray="3 1" d="M3 8h8"/><path stroke="#ddd" d="M12 9.500h6"/></svg></span>
 <span class="tk"><svg width="24" height="24"><path fill="#f07b7b" d="M12 0l6 6-6 6-6-6z"/><path fill="#7aaee8" d="M6 6l6 6-6 6-6-6z"/><path fill="#8bc66b" d="M18 6l6 6-6 6-6-6z"/><path fill="#f1dc6b" d="M12 12l6 6-6 6-6-6z"/><path fill="none" stroke="#888" stroke-width="2" d="M9 4l3 5v9M12 9l5 4"/></svg></span>
 <span class="tk"><svg width="22" height="22"><defs><linearGradient id="tg" x2="0" y2="1"><stop stop-color="#f04c9f"/><stop offset="1" stop-color="#f6a13a"/></linearGradient></defs><rect width="22" height="22" rx="4" fill="url(#tg)"/><rect x="1.500" y="1.500" width="19" height="19" rx="2" fill="#050505"/><path fill="none" stroke="#fff" d="M7 4 4.500 7.500H7L5 10M9 9.500h4"/></svg></span>
 <span class="tk"><svg width="24" height="24"><circle cx="12" cy="12" r="12" fill="#ff6c37"/><path stroke="#ffe2d5" stroke-width="3" stroke-linecap="round" d="M11 13l6-6"/><path stroke="#ffe2d5" d="M5 19l7-7"/></svg></span>
 <span class="tk"><svg width="18" height="24"><path fill="#6d7a86" d="M0 0h18v24H0z"/><path fill="#4ed8f5" d="M2 2h14v4H2z"/><g fill="#dfe4e8"><path d="M2 8h4v4H2zM7 8h4v4H7zM12 8h4v4h-4zM2 13h4v4H2zM7 13h4v4H7zM2 18h4v4H2zM7 18h4v4H7z"/></g><path fill="#0d4a8c" d="M12 13h4v9h-4z"/></svg></span>
 <span class="tk cur run"><svg width="24" height="24"><circle cx="12" cy="12" r="11.500" fill="#ffcd40"/><path fill="#db4437" d="M2 6Q6 .5 12 .5T22.500 7H12l-5 7z"/><path fill="#0f9d58" d="M2 6l5.500 9 6 .5-4 8Q1 22 .5 12 .5 9 2 6z"/><circle cx="12" cy="12" r="5.500" fill="#fff"/><circle cx="12" cy="12" r="4.300" fill="#4285f4"/></svg></span>
 <span class="tk run"><svg width="22" height="24"><path fill="#c8400f" d="M3 1q12-3 16 4 3 9-4 12l-3-1q5-4 3-9-2-4-7-3z"/><path fill="#ddd" stroke="#888" stroke-width=".5" d="M4 2l9 13-3 1zM16 3 8 16l3 1z"/><g fill="none" stroke="#1976c4" stroke-width="2.500"><circle cx="5" cy="18.500" r="3"/><circle cx="14" cy="20" r="2.800"/></g></svg></span>
 <svg class="pen ms-auto align-self-center" width="18" height="18" fill="none" stroke="#111" stroke-width="1.300"><path d="M5 8q-5 1-3 6 3 3 5-2L13 2q3-1 2 2L9 14l-3 2M12 8q5-3 4 3l-3 2"/></svg>
 <div class="clock d-flex flex-column justify-content-center"><span>19:56</span><span>23-10-2020</span></div>
</footer>
</body>
</html>
